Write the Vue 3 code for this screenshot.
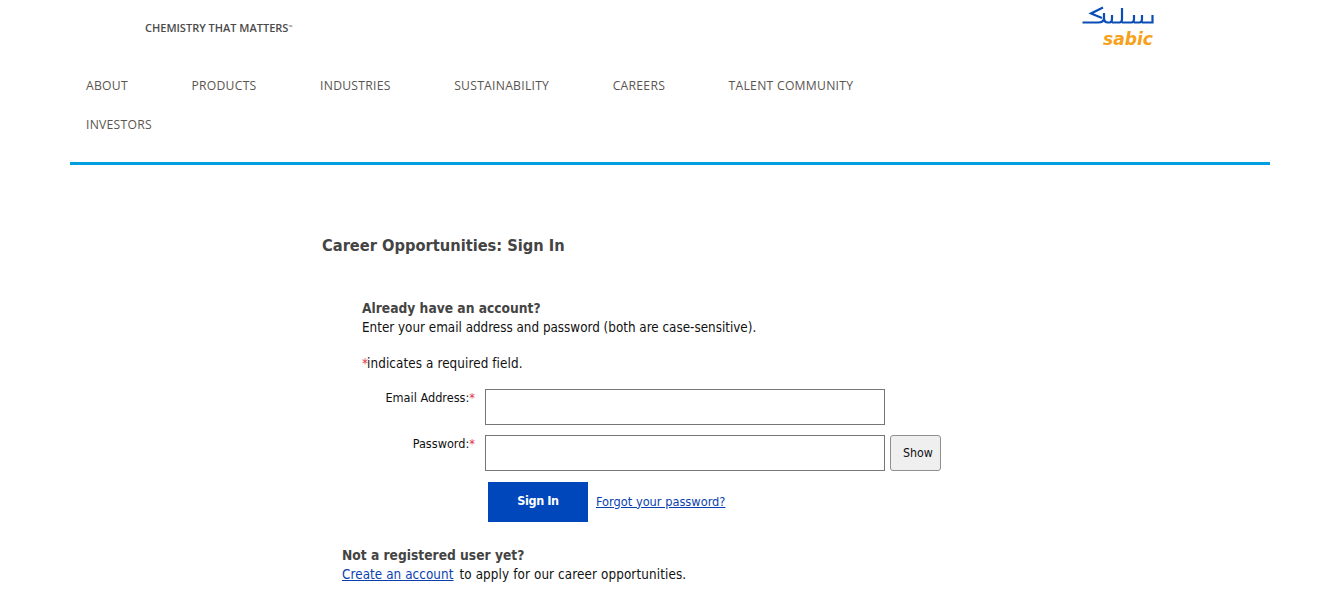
<template>
  <div class="page">
    <header class="header">
      <div class="brand-row">
        <span class="tagline">CHEMISTRY THAT MATTERS<sup>™</sup></span>
        <svg class="logo" width="72" height="48" viewBox="0 0 72 48" aria-label="SABIC">
          <path class="mark" d="M0.500 22.500H16C20 22.500 22 21 22 18V13M22 18C22 21 23.500 22.500 26 22.500H27.500C29.500 22.500 30 21 30 19V15M30 22.500H37.500C39.500 22.500 40 21 40 19V8M40 22.500H49.500C51.500 22.500 52 21 52 19V15M52 22.500H57.500C59.500 22.500 60 21 60 19V15M60 22.500H70.500V15M21 7.500L9 13.500L20 18"/>
          <text class="logo-text" x="21" y="45" textLength="50" lengthAdjust="spacingAndGlyphs">sabic</text>
        </svg>
      </div>
      <nav class="nav">
        <a v-for="item in nav" :key="item" class="nav-item">{{ item }}</a>
      </nav>
    </header>
    <main class="main">
      <h1 class="title">Career Opportunities: Sign In</h1>
      <section class="signin">
        <h2 class="subhead">Already have an account?</h2>
        <p class="line">Enter your email address and password (both are case-sensitive).</p>
        <p class="req"><span class="star">*</span>indicates a required field.</p>
        <div class="field">
          <label class="label">Email Address:<span class="star">*</span></label>
          <input class="input" type="text" />
        </div>
        <div class="field pw">
          <label class="label">Password:<span class="star">*</span></label>
          <input class="input" type="password" />
          <button class="show" type="button">Show</button>
        </div>
        <div class="actions">
          <button class="submit" type="button">Sign In</button>
          <a class="link forgot" href="#">Forgot your password?</a>
        </div>
      </section>
      <section class="register">
        <h2 class="subhead">Not a registered user yet?</h2>
        <p class="line apply"><a class="link create" href="#">Create an account</a> to apply for our career opportunities.</p>
      </section>
    </main>
  </div>
</template>

<script setup>
const nav = ['ABOUT', 'PRODUCTS', 'INDUSTRIES', 'SUSTAINABILITY', 'CAREERS', 'TALENT COMMUNITY', 'INVESTORS']
</script>

<style>
html, body { margin: 0; background: #fff; }
</style>

<style scoped>
.page {
  width: 1331px;
  height: 608px;
  overflow: hidden;
  font-family: "DejaVu Sans", sans-serif;
  font-stretch: condensed;
  font-size: 13.33px;
  color: #111;
}
.header {
  margin: 0 61px 0 70px;
  height: 165px;
  box-sizing: border-box;
  border-bottom: 3px solid #00a0e0;
}
.brand-row {
  display: flex;
  justify-content: space-between;
  height: 66px;
  padding-left: 75px;
  padding-right: 114px;
}
.tagline {
  font-family: "Open Sans", sans-serif;
  font-stretch: normal;
  font-size: 11px;
  font-weight: 600;
  color: #4a4a4a;
  line-height: 12px;
  margin-top: 22px;
  letter-spacing: 0;
}
.tagline sup { font-size: 5px; line-height: 0; vertical-align: 3px; }
.logo { flex: none; margin-right: 2px; }
.mark { fill: none; stroke: #0a4db5; stroke-width: 2.2; }
.logo-text {
  font-family: "DejaVu Sans", sans-serif;
  font-size: 17px;
  font-weight: 700;
  font-style: oblique;
  fill: #f7a11a;
}
.nav {
  display: flex;
  flex-wrap: wrap;
  width: 860px;
  column-gap: 63.5px;
  padding-left: 16px;
  box-sizing: border-box;
}
.nav-item {
  font-family: "Open Sans", sans-serif;
  font-stretch: normal;
  font-size: 12.2px;
  line-height: 39px;
  letter-spacing: 0.25px;
  color: #5a5550;
  white-space: nowrap;
}
.main { padding-left: 322px; }
.title {
  margin: 0;
  padding-top: 71px;
  font-size: 16.3px;
  line-height: 20px;
  font-weight: 700;
  color: #444;
}
.signin { padding-left: 40px; margin-top: 42px; }
.subhead {
  margin: 0;
  font-size: 13.7px;
  line-height: 20px;
  font-weight: 700;
  color: #444;
}
.line { margin: 1px 0 -1px; line-height: 18px; }
.req { margin: 19px 0 -1px; line-height: 18px; letter-spacing: 0.1px; }
.star { color: #e0324b; margin-right: -1px; }
.field { display: flex; align-items: flex-start; margin-top: 17px; }
.field.pw { margin-top: 10px; }
.label { width: 113px; text-align: right; line-height: 16px; margin: 1px 10px 0 0; font-size: 12.6px; }
.label .star { margin-right: 0; }
.input {
  width: 400px;
  height: 36px;
  box-sizing: border-box;
  border: 1px solid #767676;
  background: #fff;
  padding: 0;
  margin: 0;
}
.show {
  margin-left: 5px;
  width: 51px;
  height: 36px;
  border: 1px solid #8f8f8f;
  border-radius: 3px;
  background: #efefef;
  font: inherit;
  font-size: 12.3px;
  color: #111;
  padding: 0 0 1px 5px;
}
.actions { display: flex; align-items: center; margin: 11px 0 0 126px; }
.submit {
  width: 100px;
  height: 40px;
  border: 0;
  background: #0047bb;
  color: #fff;
  font: inherit;
  font-size: 12.5px;
  font-weight: 700;
  letter-spacing: -0.4px;
  padding: 0 0 3px;
}
.forgot { margin: -2px 0 0 8px; font-size: 12.7px; }
.link { color: #0b3fb0; text-decoration: underline; }
.create { margin-right: 2px; letter-spacing: 0.08px; }
.apply { letter-spacing: 0.12px; }
.register { margin: 23px 0 0 20px; }
</style>
